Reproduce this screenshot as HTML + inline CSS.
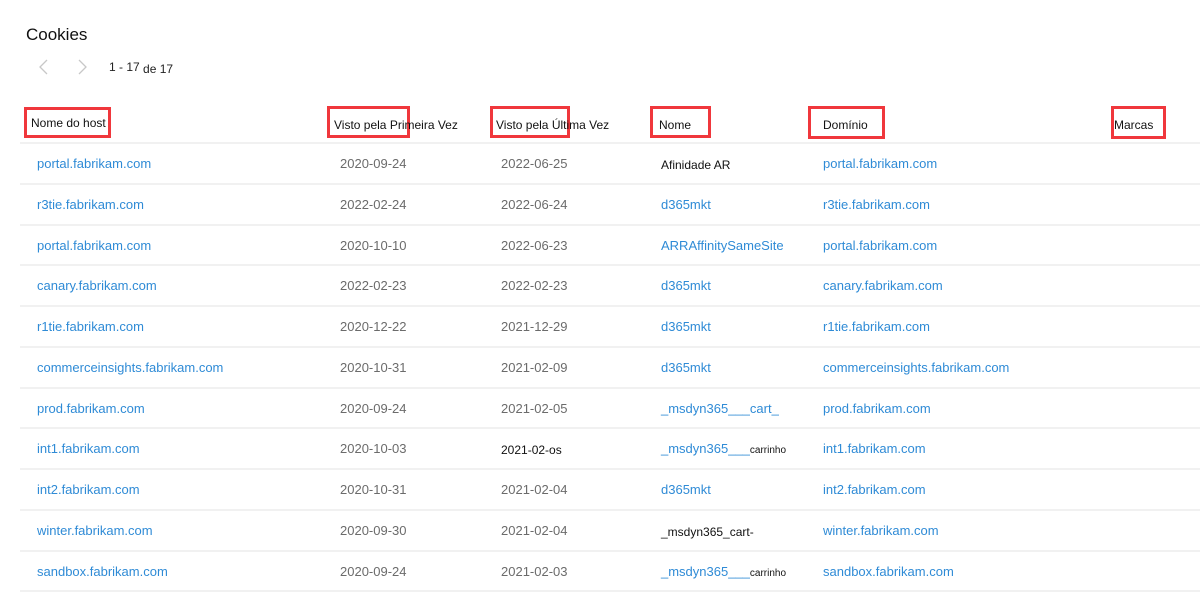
<!DOCTYPE html>
<html><head><meta charset="utf-8"><style>
body{margin:0;width:1200px;height:593px;background:#fff;font-family:"Liberation Sans",sans-serif;position:relative;overflow:hidden}
.a{position:absolute;white-space:nowrap}
.t{font-size:17px;color:#111;left:26px;top:25px}
.h{font-size:12px;color:#111}
.box{position:absolute;border:3px solid #f0373c;box-sizing:border-box}
.ln{position:absolute;left:20px;right:0;height:2px;background:#f1f1f1}
.c{font-size:13px;position:absolute;white-space:nowrap}
.l{color:#2f8bd6}.g{color:#6b6b6b}.k{color:#111}
</style></head><body>
<div class="a t">Cookies</div>
<svg class="a" style="left:36px;top:58px" width="16" height="18"><path d="M11 2 L4 9 L11 16" stroke="#c8c8c8" stroke-width="1.3" fill="none"/></svg>
<svg class="a" style="left:74px;top:58px" width="16" height="18"><path d="M5 2 L12 9 L5 16" stroke="#c8c8c8" stroke-width="1.3" fill="none"/></svg>
<div class="a" style="left:109px;top:60px;font-size:12px;color:#222">1 - 17 <span style="position:relative;top:2px">de 17</span></div>

<div class="box" style="left:24px;top:107px;width:87px;height:31px"></div>
<div class="box" style="left:327px;top:106px;width:83px;height:32px"></div>
<div class="box" style="left:490px;top:106px;width:80px;height:32px"></div>
<div class="box" style="left:650px;top:106px;width:61px;height:32px"></div>
<div class="box" style="left:808px;top:106px;width:77px;height:33px"></div>
<div class="box" style="left:1111px;top:106px;width:55px;height:33px"></div>
<div class="a h" style="left:31px;top:116px">Nome do host</div>
<div class="a h" style="left:334px;top:118px">Visto pela Primeira Vez</div>
<div class="a h" style="left:496px;top:118px">Visto pela Última Vez</div>
<div class="a h" style="left:659px;top:118px">Nome</div>
<div class="a h" style="left:823px;top:118px">Domínio</div>
<div class="a h" style="left:1114px;top:118px">Marcas</div>

<div id="rows"></div>
<script>
var d=[["portal.fabrikam.com","2020-09-24","2022-06-25","Afinidade AR","portal.fabrikam.com",1],
["r3tie.fabrikam.com","2022-02-24","2022-06-24","d365mkt","r3tie.fabrikam.com"],
["portal.fabrikam.com","2020-10-10","2022-06-23","ARRAffinitySameSite","portal.fabrikam.com"],
["canary.fabrikam.com","2022-02-23","2022-02-23","d365mkt","canary.fabrikam.com"],
["r1tie.fabrikam.com","2020-12-22","2021-12-29","d365mkt","r1tie.fabrikam.com"],
["commerceinsights.fabrikam.com","2020-10-31","2021-02-09","d365mkt","commerceinsights.fabrikam.com"],
["prod.fabrikam.com","2020-09-24","2021-02-05","_msdyn365___cart_","prod.fabrikam.com"],
["int1.fabrikam.com","2020-10-03","2021-02-os","_msdyn365___<small style='font-size:10px;color:#111'>carrinho</small>","int1.fabrikam.com",0,1],
["int2.fabrikam.com","2020-10-31","2021-02-04","d365mkt","int2.fabrikam.com"],
["winter.fabrikam.com","2020-09-30","2021-02-04","_msdyn365_cart-","winter.fabrikam.com",1],
["sandbox.fabrikam.com","2020-09-24","2021-02-03","_msdyn365___<small style='font-size:10px;color:#111'>carrinho</small>","sandbox.fabrikam.com"]];
var h="";
for(var i=0;i<d.length;i++){var r=d[i],y=142+i*40.75;
h+='<div class="ln" style="top:'+y+'px"></div>';
var ty=y+14;
h+='<div class="c l" style="left:37px;top:'+ty+'px">'+r[0]+'</div>';
h+='<div class="c g" style="left:340px;top:'+ty+'px">'+r[1]+'</div>';
h+='<div class="c '+(r[6]?'k':'g')+'" style="left:501px;top:'+(ty+(r[6]?2:0))+'px;'+(r[6]?'font-size:12px':'')+'">'+r[2]+'</div>';
h+='<div class="c '+(r[5]?'k':'l')+'" style="left:661px;top:'+(ty+(r[5]?2:0))+'px;'+(r[5]?'font-size:12px':'')+'">'+r[3]+'</div>';
h+='<div class="c l" style="left:823px;top:'+ty+'px">'+r[4]+'</div>';}
h+='<div class="ln" style="top:'+(142+11*40.75)+'px"></div>';
document.getElementById("rows").innerHTML=h;
</script>
</body></html>
